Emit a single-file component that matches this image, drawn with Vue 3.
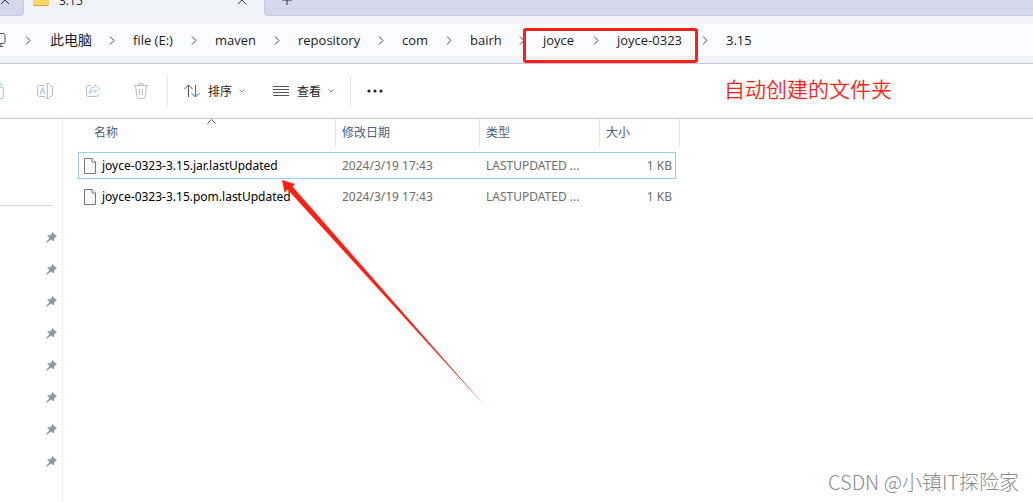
<script setup>
const crumbs = [
  { label: '此电脑', width: 83, cjk: true },
  { label: 'file (E:)', width: 82 },
  { label: 'maven', width: 83 },
  { label: 'repository', width: 104 },
  { label: 'com', width: 68 },
  { label: 'bairh', width: 73 },
  { label: 'joyce', width: 74 },
  { label: 'joyce-0323', width: 109 },
  { label: '3.15', width: 40 },
]
const crumbColumns = crumbs.map((c) => c.width + 'px').join(' ')
const files = [
  { name: 'joyce-0323-3.15.jar.lastUpdated', date: '2024/3/19 17:43', type: 'LASTUPDATED ...', size: '1 KB', selected: true },
  { name: 'joyce-0323-3.15.pom.lastUpdated', date: '2024/3/19 17:43', type: 'LASTUPDATED ...', size: '1 KB', selected: false },
]
</script>

<template>
  <div class="explorer">
    <header class="tabs">
      <div class="tab side-tab">
        <button class="icon-btn" aria-label="关闭">
          <svg width="10" height="10" viewBox="0 0 10 10"><path d="M1 1l8 8M9 1l-8 8" /></svg>
        </button>
      </div>
      <div class="tab active-tab">
        <svg class="folder" width="16" height="14" viewBox="0 0 16 14">
          <path d="M0 2q0-2 2-2h3l2 2h7q2 0 2 2v8q0 2-2 2H2q-2 0-2-2z" fill="#e9a21f" />
          <path d="M0 4h16v7q0 2-2 2H2q-2 0-2-2z" fill="#ffd766" />
        </svg>
        <span class="tab-title">3.15</span>
        <button class="icon-btn" aria-label="关闭标签页">
          <svg width="10" height="10" viewBox="0 0 10 10"><path d="M1 1l8 8M9 1l-8 8" /></svg>
        </button>
      </div>
      <div class="tab rest-tab">
        <button class="icon-btn" aria-label="新建标签页">
          <svg width="12" height="12" viewBox="0 0 12 12"><path d="M6 0v11M1 6h10" /></svg>
        </button>
      </div>
    </header>

    <nav class="address">
      <svg class="monitor" width="12" height="16" viewBox="0 0 12 16">
        <path d="M0 1.500h9q2 0 2 2v6q0 2-2 2H0M7 12v2.500M3 14.500h6" />
      </svg>
      <svg class="chev" width="6" height="9" viewBox="0 0 6 9"><path d="M1 .5l4 4-4 4" /></svg>
      <ol class="crumbs" :style="{ gridTemplateColumns: crumbColumns }">
        <li v-for="(c, i) in crumbs" :key="c.label">
          <a href="#" :class="{ cjk: c.cjk }">{{ c.label }}</a>
          <svg v-if="i < crumbs.length - 1" class="chev" width="6" height="9" viewBox="0 0 6 9"><path d="M1 .5l4 4-4 4" /></svg>
        </li>
      </ol>
    </nav>

    <div class="toolbar">
      <div class="tools">
        <button aria-label="粘贴">
          <svg width="16" height="18" viewBox="0 0 16 18">
            <path class="grey" d="M7 3.500V2.500q0-1 1-1h3.500q1 0 1 1V4" />
            <rect class="blue" x="5.500" y="5.500" width="9" height="11" rx="1.500" />
          </svg>
        </button>
        <button aria-label="重命名">
          <svg width="18" height="18" viewBox="0 0 18 18">
            <path class="grey" d="M9 3.500H3.500q-2 0-2 2v7q0 2 2 2H9M14 3.500q2.500 0 2.500 2v7q0 2-2.500 2" />
            <path class="blue" d="M4 12.500L6.500 5.500 9 12.500M5 10h3.500M11.500 1.500v15M9.500 1.500h4M9.500 16.500h4" />
          </svg>
        </button>
        <button aria-label="共享">
          <svg width="16" height="16" viewBox="0 0 16 16">
            <path class="grey" d="M6 2.500H3.500q-2 0-2 2v7q0 2 2 2h8q2 0 2-2V11" />
            <path class="blue" d="M10 1.500L14.500 5.500 10 9.500V7.500Q6.500 7.200 4.500 10.500 4.800 4 10 3.700z" />
          </svg>
        </button>
        <button aria-label="删除">
          <svg width="16" height="18" viewBox="0 0 16 18">
            <path class="grey" d="M1 3.500h14M5.500 3.500q0-2.500 2.500-2.500t2.500 2.500M2.500 3.500l1.300 11q.2 2 2 2h4.400q1.800 0 2-2l1.300-11M6.500 7v6M9.500 7v6" />
          </svg>
        </button>
      </div>
      <div class="group">
        <button class="menu">
          <svg width="16" height="14" viewBox="0 0 16 14">
            <path d="M4.500 13V1.500M.5 5l4-4 4 4" stroke="#555" />
            <path d="M11.500 1v11.500M7.500 9l4 4 4-4" stroke="#1778bd" />
          </svg>
          <span>排序</span>
          <svg width="6" height="4" viewBox="0 0 6 4"><path d="M.5.5L3 3 5.500.5" stroke="#888" /></svg>
        </button>
        <button class="menu">
          <svg width="16" height="12" viewBox="0 0 16 12"><path d="M0 1.500h16M0 4.500h16M0 7.500h16M0 10.500h16" stroke="#555" /></svg>
          <span>查看</span>
          <svg width="6" height="4" viewBox="0 0 6 4"><path d="M.5.5L3 3 5.500.5" stroke="#888" /></svg>
        </button>
      </div>
      <button class="more" aria-label="查看更多">
        <svg width="16" height="4" viewBox="0 0 16 4">
          <g fill="#222"><circle cx="2" cy="2" r="1.600" /><circle cx="8" cy="2" r="1.600" /><circle cx="14" cy="2" r="1.600" /></g>
        </svg>
      </button>
    </div>

    <div class="content">
      <aside class="sidebar">
        <ul>
          <li v-for="n in 8" :key="n">
            <svg width="11" height="11" viewBox="0 0 11 11">
              <path d="M6.300 0L11 4.500 9.600 5 8 7 7.600 9.600 5 7.600.4 11 0 10.600 3.400 6 1 3.600 4 3.300 6 1.500z" fill="#8a98a3" />
            </svg>
          </li>
        </ul>
      </aside>
      <main class="list">
        <table>
          <colgroup>
            <col class="c-name" /><col class="c-date" /><col class="c-type" /><col class="c-size" /><col class="c-end" />
          </colgroup>
          <thead>
            <tr>
              <th class="h-name">
                <div>名称</div>
                <svg class="sorted" width="9" height="5" viewBox="0 0 9 5"><path d="M.5 4.500l4-4 4 4" /></svg>
              </th>
              <th><div>修改日期</div></th>
              <th><div>类型</div></th>
              <th colspan="2"><div>大小</div></th>
            </tr>
          </thead>
          <tbody>
            <tr v-for="f in files" :key="f.name" :class="{ selected: f.selected }">
              <td>
                <div class="file">
                  <svg width="12" height="16" viewBox="0 0 12 16">
                    <path d="M.5.5H8L11.500 4v11.500H.5z" fill="#fafafa" stroke="#777" />
                    <path d="M8 .5V4h3.500" fill="#fff" stroke="#777" />
                  </svg>
                  <span>{{ f.name }}</span>
                </div>
              </td>
              <td>{{ f.date }}</td>
              <td>{{ f.type }}</td>
              <td class="size">{{ f.size }}</td>
              <td class="end"></td>
            </tr>
          </tbody>
        </table>
      </main>
    </div>

    <div class="frame"></div>
    <p class="note">自动创建的文件夹</p>
    <svg class="arrow" width="204" height="228" viewBox="0 0 204 228">
      <path d="M0 0L13 4 10.500 6.500 203 226 5.500 9.500 2.500 12.500z" fill="#ff2013" />
    </svg>
    <p class="watermark">CSDN @小镇IT探险家</p>
  </div>
</template>

<style>
body {
  margin: 0;
  background: #fff;
}
</style>

<style scoped>
.explorer {
  position: relative;
  display: flex;
  flex-direction: column;
  min-height: 100vh;
  overflow: hidden;
  font-family: "Open Sans", "Noto Sans CJK SC", sans-serif;
  font-size: 12px;
  color: #1b1b1b;
}
button {
  border: 0;
  padding: 0;
  background: none;
  font: inherit;
  color: inherit;
}
svg {
  display: block;
  flex: none;
  fill: none;
}
.tabs {
  display: flex;
  align-items: flex-end;
  height: 16px;
  overflow: hidden;
  background: #f1f3fa;
}
.tab {
  box-sizing: border-box;
  display: flex;
  align-items: center;
  flex: none;
  height: 32px;
}
.side-tab {
  width: 24px;
  background: #d3d8ec;
  border-right: 1px solid #c5cae2;
  border-bottom: 1px solid #c5cae2;
  border-radius: 0 0 4px 0;
}
.active-tab {
  width: 240px;
  padding: 0 17px 0 9px;
}
.folder {
  margin-bottom: 2px;
}
.tab-title {
  flex: 1;
  margin-left: 10px;
}
.rest-tab {
  flex: 1;
  padding-left: 16px;
  background: #d3d8ec;
  border-left: 1px solid #c5cae2;
  border-bottom: 1px solid #c5cae2;
  border-radius: 0 0 0 4px;
}
.icon-btn path {
  stroke: #333;
}
.address {
  display: flex;
  align-items: center;
  height: 32px;
  background: #fbfcff;
  border-top: 8px solid #f1f2fa;
  border-bottom: 7px solid #f1f2fa;
  font-size: 13px;
}
.monitor {
  margin-left: -6px;
}
.monitor path {
  stroke: #555;
}
.monitor + .chev {
  margin-left: 19px;
}
.chev path {
  stroke: #444;
}
.crumbs {
  display: grid;
  margin: 0 0 0 19px;
  padding: 0;
  list-style: none;
}
.crumbs li {
  display: flex;
  align-items: center;
  justify-content: space-between;
  padding-right: 18px;
  line-height: 18px;
  white-space: nowrap;
}
.crumbs a {
  color: inherit;
  text-decoration: none;
}
.crumbs .cjk {
  font-size: 14px;
}
.toolbar {
  display: flex;
  align-items: center;
  height: 54px;
  border-top: 1px solid #c3c8de;
  border-bottom: 1px solid #c3c8de;
}
.tools {
  display: flex;
  margin: 0 2px 0 -27px;
}
.tools button {
  display: flex;
  align-items: center;
  justify-content: center;
  width: 48px;
  height: 32px;
}
.grey {
  stroke: #bdbdbd;
}
.blue {
  stroke: #9ccbed;
}
.group {
  display: flex;
  border-left: 1px solid #e9e9ec;
  border-right: 1px solid #e9e9ec;
  padding: 0 2px;
}
.menu {
  display: flex;
  align-items: center;
  height: 32px;
  padding: 0 14px;
}
.menu span {
  margin: 0 7px 0 8px;
}
.more {
  margin-left: 16px;
}
.content {
  display: flex;
  flex: 1;
}
.sidebar {
  flex: none;
  width: 62px;
  border-right: 1px solid #f0f0f2;
}
.sidebar ul {
  margin: 86px 10px 0 0;
  padding: 15px 0 0;
  border-top: 1px solid #d5d5d5;
  list-style: none;
}
.sidebar li {
  display: flex;
  align-items: center;
  justify-content: flex-end;
  height: 32px;
  margin-right: -5px;
}
.list {
  flex: 1;
  padding-left: 15px;
}
table {
  table-layout: fixed;
  width: 602px;
  margin-top: -4px;
  border-collapse: separate;
  border-spacing: 0 4px;
  font-family: "Noto Sans", "Noto Sans CJK SC", sans-serif;
}
.c-name {
  width: 258px;
}
.c-date {
  width: 144px;
}
.c-type {
  width: 120px;
}
.c-size {
  width: 76px;
}
.c-end {
  width: 4px;
}
th {
  position: relative;
  height: 29px;
  padding: 0;
  vertical-align: top;
  text-align: left;
  font-weight: 400;
  color: #4c607a;
}
th div {
  height: 28px;
  padding-left: 6px;
  border-right: 1px solid #e3e5e8;
  line-height: 27px;
}
.h-name div {
  padding-left: 16px;
}
.sorted {
  position: absolute;
  top: 0;
  left: 129px;
}
.sorted path {
  stroke: #555;
}
td {
  box-sizing: border-box;
  height: 27px;
  padding: 0 0 0 6px;
  border: 1px solid transparent;
  border-width: 1px 0;
  line-height: 16px;
  white-space: nowrap;
  color: #6d6d6d;
}
td:first-child {
  padding-left: 5px;
  border-left-width: 1px;
}
.size {
  padding: 0 3px 0 0;
  border-right-width: 1px;
  text-align: right;
}
.end {
  padding: 0;
}
.selected td:not(.end) {
  border-color: #99cff7;
}
.file {
  display: flex;
  align-items: center;
  gap: 6px;
  color: #000;
}
.frame {
  position: absolute;
  top: 28px;
  left: 523px;
  width: 169px;
  height: 29px;
  border: 3px solid #ff2013;
  border-radius: 3px;
}
.note {
  position: absolute;
  top: 73px;
  left: 724px;
  margin: 0;
  font-size: 21px;
  font-weight: 350;
  line-height: 32px;
  color: #ff2013;
}
.arrow {
  position: absolute;
  top: 180px;
  left: 282px;
}
.watermark {
  position: absolute;
  right: 14px;
  bottom: 6px;
  margin: 0;
  font-family: "Noto Sans CJK SC", sans-serif;
  font-size: 20px;
  font-weight: 300;
  line-height: 28px;
  color: #8c8c8c;
}
</style>
